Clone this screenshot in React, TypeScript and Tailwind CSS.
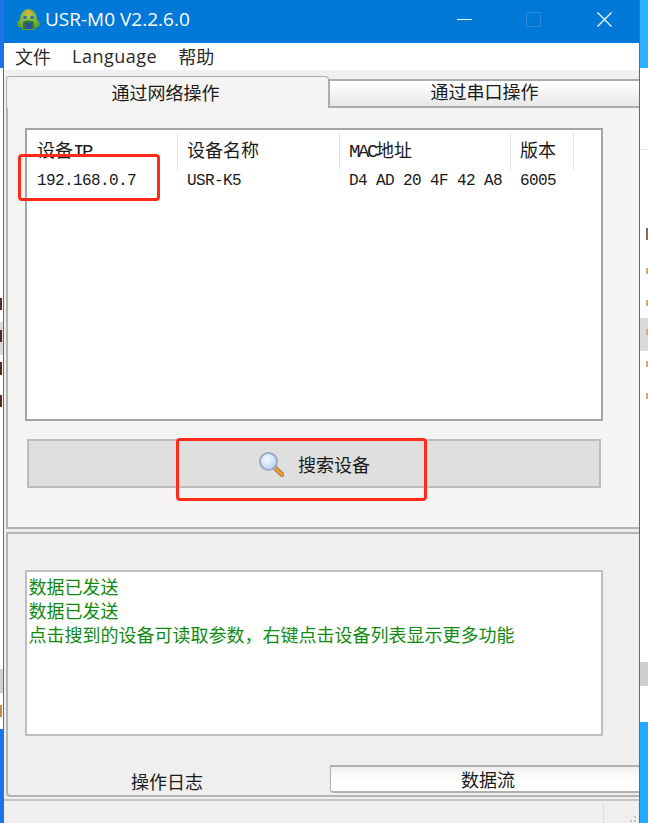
import React from "react";

const CJK = "font-['Noto_Sans_CJK_SC','Liberation_Sans',sans-serif]";
const MONO = "font-['Liberation_Mono','Noto_Sans_CJK_SC',monospace]";
const HEAD_LATIN = "font-['Liberation_Mono',monospace] text-[19px] tracking-[-2.4px]";

const devices = [
  { ip: "192.168.0.7", name: "USR-K5", mac: "D4 AD 20 4F 42 A8", version: "6005" },
];

const logLines = [
  "数据已发送",
  "数据已发送",
  "点击搜到的设备可读取参数，右键点击设备列表显示更多功能",
];

const AppLogo = () => (
  <svg width="25" height="24" viewBox="0 0 25 24">
    <defs>
      <radialGradient id="head" cx="50%" cy="35%" r="65%">
        <stop offset="0%" stopColor="#a5cf4a" />
        <stop offset="100%" stopColor="#5f9e2c" />
      </radialGradient>
    </defs>
    <path d="M4 12 C4 5 8 1 12.5 1 C17 1 21 5 21 12 C23.5 13 24.5 15.5 23.5 18 C22 19.5 20.5 19.5 19.5 19 L19 22 L6 22 L5.5 19 C4.5 19.5 3 19.5 1.5 18 C0.5 15.5 1.5 13 4 12 Z" fill="url(#head)" />
    <ellipse cx="12.5" cy="4.5" rx="3" ry="2.2" fill="#e2a541" />
    <path d="M7 14 C9 12 16 12 18 14 L18 21 L7 21 Z" fill="#2a7a4a" />
    <circle cx="9" cy="9.5" r="1.8" fill="#3a6ab0" />
    <circle cx="16" cy="9.5" r="1.8" fill="#3a6ab0" />
    <path d="M9 15 L16 15 L15.5 21 L9.5 21 Z" fill="#2a4fa0" />
  </svg>
);

const SearchIcon = () => (
  <svg width="26" height="26" viewBox="0 0 26 26">
    <defs>
      <radialGradient id="lens" cx="40%" cy="35%" r="70%">
        <stop offset="0%" stopColor="#f4f9fe" />
        <stop offset="100%" stopColor="#b4d2f0" />
      </radialGradient>
    </defs>
    <path d="M16 16 L24 23.5" stroke="#7a6a50" strokeWidth="4.5" strokeLinecap="round" />
    <path d="M17 17 L24 23.5" stroke="#eb9a2e" strokeWidth="3.2" strokeLinecap="round" />
    <circle cx="10.5" cy="10.5" r="8.5" fill="url(#lens)" stroke="#9aa9c4" strokeWidth="2" />
  </svg>
);

const LeftStrip = () => (
  <div className="flex h-[823px] w-[3px] flex-col bg-white">
    <div className="h-[68px] shrink-0 bg-[#1a73e8]" />
    <div className="h-[230px] shrink-0" />
    <div className="h-[12px] w-[2px] shrink-0 bg-[#5a2a20]" />
    <div className="h-[12px] shrink-0" />
    <div className="h-[33px] shrink-0 bg-[#d9d9d9] pt-[8px]">
      <div className="h-[12px] w-[2px] bg-[#5a2a20]" />
    </div>
    <div className="h-[7px] shrink-0" />
    <div className="h-[13px] w-[2px] shrink-0 bg-[#5a2a20]" />
    <div className="h-[20px] shrink-0" />
    <div className="h-[12px] w-[2px] shrink-0 bg-[#5a2a20]" />
    <div className="h-[262px] shrink-0" />
    <div className="h-[24px] shrink-0 bg-[#cfcfcf]" />
    <div className="h-[12px] shrink-0" />
    <div className="h-[12px] w-[2px] shrink-0 bg-[#c98a4a]" />
    <div className="h-[12px] shrink-0" />
    <div className="flex-1 bg-[#1a73e8]" />
  </div>
);

const RightMark = () => <div className="ml-[6px] h-[6px] w-[2px] shrink-0 bg-[#d9a877]" />;

const RightStrip = () => (
  <div className="flex h-[823px] w-[8px] flex-col bg-white">
    <div className="h-[68px] shrink-0 bg-[#2eb0ff]" />
    <div className="h-[82px] shrink-0 border-b border-[#e4e4e4]" />
    <div className="h-[78px] shrink-0" />
    <div className="ml-[6px] h-[12px] w-[2px] shrink-0 bg-[#8a6a50]" />
    <div className="h-[28px] shrink-0" />
    <RightMark />
    <div className="h-[26px] shrink-0" />
    <RightMark />
    <div className="h-[12px] shrink-0" />
    <div className="h-[33px] shrink-0 bg-[#d9d9d9] pt-[11px]">
      <RightMark />
    </div>
    <div className="h-[10px] shrink-0" />
    <RightMark />
    <div className="h-[26px] shrink-0" />
    <RightMark />
    <div className="h-[263px] shrink-0" />
    <div className="h-[24px] shrink-0 bg-[#cfcfcf]" />
    <div className="h-[36px] shrink-0" />
    <div className="flex-1 bg-[#22aaff]" />
  </div>
);

export default function App() {
  return (
    <div className={`relative flex h-[823px] w-[648px] overflow-hidden bg-white text-[18px] text-[#1a1a1a] ${CJK}`}>
      <LeftStrip />
      <div className="flex h-[823px] w-[637px] flex-col border-x border-[#2a7ab8] bg-[#f0f0f0]">
        <div className="flex h-[43px] shrink-0 items-center bg-[#0078d7] pb-[4px] pl-[12px] text-white">
          <AppLogo />
          <span className="ml-[4px] font-['Open_Sans',sans-serif] text-[19px] leading-none">USR-M0 V2.2.6.0</span>
          <div className="ml-auto flex items-center pr-[27px]">
            <div className="h-px w-[15px] bg-white" />
            <div className="ml-[54px] h-[15px] w-[15px] border border-[#2b8ad9]" />
            <svg className="ml-[56px]" width="15" height="15" viewBox="0 0 15 15">
              <path d="M0.5 0.5 L14.5 14.5 M14.5 0.5 L0.5 14.5" stroke="#ffffff" strokeWidth="1.2" />
            </svg>
          </div>
        </div>

        <div className="flex h-[27px] shrink-0 items-center gap-[21px] bg-white pl-[11px] text-[#2a2a2a]">
          <span>文件</span>
          <span className="font-['Open_Sans',sans-serif] text-[18px] tracking-[0.5px]">Language</span>
          <span>帮助</span>
        </div>

        <div className="h-[6px] shrink-0 bg-[#f0f0f0]" />

        <div className="flex h-[32px] shrink-0 pl-[2px]">
          <div className="z-10 flex h-[32px] w-[323px] items-start justify-center rounded-t-[4px] border-x border-t border-[#a9adb0] bg-[#f5f4f2] pr-[4px] pt-[2px] leading-[26px]">
            通过网络操作
          </div>
          <div className="mt-[3px] flex h-[29px] flex-1 items-center justify-center border-y-2 border-l border-[#a9adb0] bg-gradient-to-b from-white to-[#e8e8e8] pb-[5px] leading-none">
            通过串口操作
          </div>
        </div>

        <div className="ml-[2px] flex h-[421px] shrink-0 flex-col border-b-2 border-l-2 border-[#b2b4b6] bg-[#f5f4f2] pl-[17px] pt-[20px]">
          <div className="h-[293px] w-[578px] border-2 border-[#a0a5aa] bg-white pt-[2px]">
            <div className="grid h-[35px] grid-cols-[151px_162px_171px_63px] leading-[35px]">
              <div className="border-r border-[#e4e4e4] pl-[10px]">设备<span className={HEAD_LATIN}>IP</span></div>
              <div className="border-r border-[#e4e4e4] pl-[9px]">设备名称</div>
              <div className="border-r border-[#e4e4e4] pl-[9px]"><span className={HEAD_LATIN}>MAC</span>地址</div>
              <div className="border-r border-[#e4e4e4] pl-[9px]">版本</div>
            </div>
            {devices.map((device) => (
              <div key={device.ip} className={`grid h-[26px] grid-cols-[151px_162px_171px_63px] pt-[1px] text-[16px] leading-[26px] tracking-[-0.6px] ${MONO}`}>
                <div className="pl-[10px]">{device.ip}</div>
                <div className="pl-[9px]">{device.name}</div>
                <div className="pl-[9px]">{device.mac}</div>
                <div className="pl-[9px]">{device.version}</div>
              </div>
            ))}
          </div>
          <button className="ml-[2px] mt-[18px] flex h-[49px] w-[574px] items-center justify-center gap-[14px] border-2 border-[#bcbcbc] bg-[#dfdfdf] leading-none">
            <SearchIcon />
            <span>搜索设备</span>
          </button>
        </div>

        <div className="h-[3px] shrink-0 bg-[#ececec]" />

        <div className="ml-[2px] flex h-[265px] shrink-0 flex-col rounded-bl-[4px] border-2 border-r-0 border-[#b2b4b6] bg-[#efefef] pl-[17px] pt-[36px]">
          <div className="h-[166px] w-[578px] border-2 border-[#bdbdc2] bg-white pl-[1.5px] pt-[2px] leading-[24px] text-[#118a11]">
            {logLines.map((line, idx) => (
              <div key={idx}>{line}</div>
            ))}
          </div>
          <div className="-ml-[17px] mt-auto flex h-[30px]">
            <div className="flex w-[322px] items-center justify-center pr-[4px] pt-[1px] leading-none">操作日志</div>
            <div className="flex h-[28px] flex-1 items-center justify-center rounded-bl-[4px] border-y-2 border-l border-[#b0b0b0] bg-gradient-to-b from-[#efefef] via-white to-white pb-[1px] pl-[6px] leading-none">
              数据流
            </div>
          </div>
        </div>

        <div className="h-[2px] shrink-0" />

        <div className="flex flex-1 justify-end border-t-2 border-[#c4c4c4] bg-[#efefef] pt-[2px]">
          <div className="relative w-[36px] border-l border-[#dcdcdc]">
            <div className="absolute bottom-[1px] right-[3px] grid grid-cols-2 gap-[2px]">
              <div />
              <div className="h-[2px] w-[2px] bg-[#c4c4c4]" />
              <div className="h-[2px] w-[2px] bg-[#c4c4c4]" />
              <div className="h-[2px] w-[2px] bg-[#c4c4c4]" />
            </div>
          </div>
        </div>
      </div>
      <RightStrip />

      <div className="absolute left-[18px] top-[154px] h-[47px] w-[142px] rounded-[4px] border-[3px] border-[#ff2a1a]" />
      <div className="absolute left-[176px] top-[438px] h-[63px] w-[251px] rounded-[4px] border-[3px] border-[#ff2a1a]" />
    </div>
  );
}
